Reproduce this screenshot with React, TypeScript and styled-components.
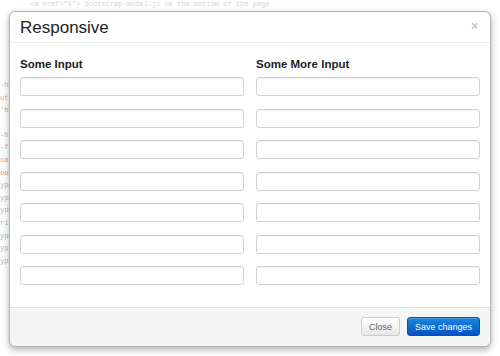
import React from "react";
import styled, { createGlobalStyle } from "styled-components";

const Global = createGlobalStyle`
  html, body { margin: 0; padding: 0; background: #fff; }
  * { box-sizing: border-box; }
`;

const Page = styled.div`
  position: relative;
  width: 500px;
  height: 356px;
  overflow: hidden;
  background: #fff;
  font-family: "Liberation Sans", Arial, sans-serif;
`;

const Backdrop = styled.div`
  display: flex;
  flex-direction: column;
  font-family: "Liberation Mono", monospace;
  font-size: 7px;
  line-height: 12.6px;
  white-space: pre;
`;

const TopLine = styled.div`
  color: #d4d4d4;
  padding-left: 30px;
  font-size: 7px;
  line-height: 9px;
`;

const CodeBlock = styled.div<{ $top: number }>`
  margin-top: ${(p) => p.$top}px;
  display: flex;
  flex-direction: column;
`;

const CodeLine = styled.div<{ $c: string }>`
  color: ${(p) => p.$c};
`;

const Modal = styled.div`
  position: absolute;
  left: 9px;
  top: 11px;
  width: 482px;
  height: 336px;
  display: flex;
  flex-direction: column;
  background: #fff;
  border: 1px solid rgba(0, 0, 0, 0.3);
  border-radius: 6px;
  box-shadow: 0 3px 7px rgba(0, 0, 0, 0.3);
`;

const Header = styled.div`
  height: 31px;
  display: flex;
  align-items: center;
  justify-content: space-between;
  padding: 0 10px;
  border-bottom: 1px solid #eee;
`;

const Title = styled.h3`
  margin: 0;
  font-size: 17px;
  font-weight: normal;
  color: #222;
  padding-top: 1px;
`;

const CloseX = styled.span`
  font-size: 12px;
  color: #c4c4c4;
  font-weight: bold;
  margin-top: -3px;
  margin-right: 2px;
`;

const Body = styled.div`
  flex: 1;
  display: grid;
  grid-template-columns: 224px 224px;
  column-gap: 12px;
  padding: 14px 10px 0 10px;
`;

const Column = styled.div`
  display: flex;
  flex-direction: column;
`;

const Label = styled.div`
  font-size: 11.5px;
  font-weight: bold;
  color: #222;
  height: 15px;
  line-height: 15px;
  margin-bottom: 5px;
`;

const Input = styled.div`
  height: 19px;
  margin-bottom: 12.5px;
  border: 1px solid #d2d2d2;
  border-radius: 3px;
  background: #fff;
  box-shadow: inset 0 1px 1px rgba(0, 0, 0, 0.06);
`;

const Footer = styled.div`
  height: 39px;
  display: flex;
  align-items: center;
  justify-content: flex-end;
  gap: 7px;
  padding: 0 10px 1px 0;
  background: #f5f5f5;
  border-top: 1px solid #ddd;
  border-radius: 0 0 6px 6px;
  box-shadow: inset 0 1px 0 #fff;
`;

const Button = styled.button<{ $primary?: boolean }>`
  height: 19px;
  padding: 0 7px;
  font-family: "Liberation Sans", Arial, sans-serif;
  font-size: 9px;
  border-radius: 3px;
  cursor: pointer;
  color: ${(p) => (p.$primary ? "#fff" : "#666")};
  border: 1px solid ${(p) => (p.$primary ? "#0a4fb0" : "#ccc")};
  background: ${(p) =>
    p.$primary
      ? "linear-gradient(#1a87e0, #0452c6)"
      : "linear-gradient(#fff, #e6e6e6)"};
  box-shadow: inset 0 1px 0 rgba(255, 255, 255, 0.2);
`;

const leftLines: [string, string][] = [
  ["-he", "#e7a1a8"],
  ["utt", "#e7a1a8"],
  ["'h", "#a9a9a9"],
];

const leftLines2: [string, string][] = [
  ["-b", "#e7a1a8"],
  ["-f1", "#e7a1a8"],
  ["oad", "#e7a1a8"],
  ["out", "#a9a9a9"],
  ["ype", "#8fc4c4"],
  ["ype", "#8fc4c4"],
  ["ype", "#8fc4c4"],
  ["rie", "#8fc4c4"],
  ["ype", "#8fc4c4"],
  ["ype", "#8fc4c4"],
  ["ype", "#8fc4c4"],
];

export default function App() {
  const rows = Array.from({ length: 7 });
  return (
    <>
      <Global />
      <Page>
        <Backdrop aria-hidden>
          <TopLine>{"<a href=\"#\"> bootstrap-modal.js ok the bottom of the page"}</TopLine>
          <CodeBlock $top={70}>
            {leftLines.map(([t, c], i) => (
              <CodeLine key={i} $c={c}>{t}</CodeLine>
            ))}
          </CodeBlock>
          <CodeBlock $top={12}>
            {leftLines2.map(([t, c], i) => (
              <CodeLine key={i} $c={c}>{t}</CodeLine>
            ))}
          </CodeBlock>
        </Backdrop>
        <Modal>
          <Header>
            <Title>Responsive</Title>
            <CloseX>×</CloseX>
          </Header>
          <Body>
            <Column>
              <Label>Some Input</Label>
              {rows.map((_, i) => (
                <Input key={i} />
              ))}
            </Column>
            <Column>
              <Label>Some More Input</Label>
              {rows.map((_, i) => (
                <Input key={i} />
              ))}
            </Column>
          </Body>
          <Footer>
            <Button>Close</Button>
            <Button $primary>Save changes</Button>
          </Footer>
        </Modal>
      </Page>
    </>
  );
}
